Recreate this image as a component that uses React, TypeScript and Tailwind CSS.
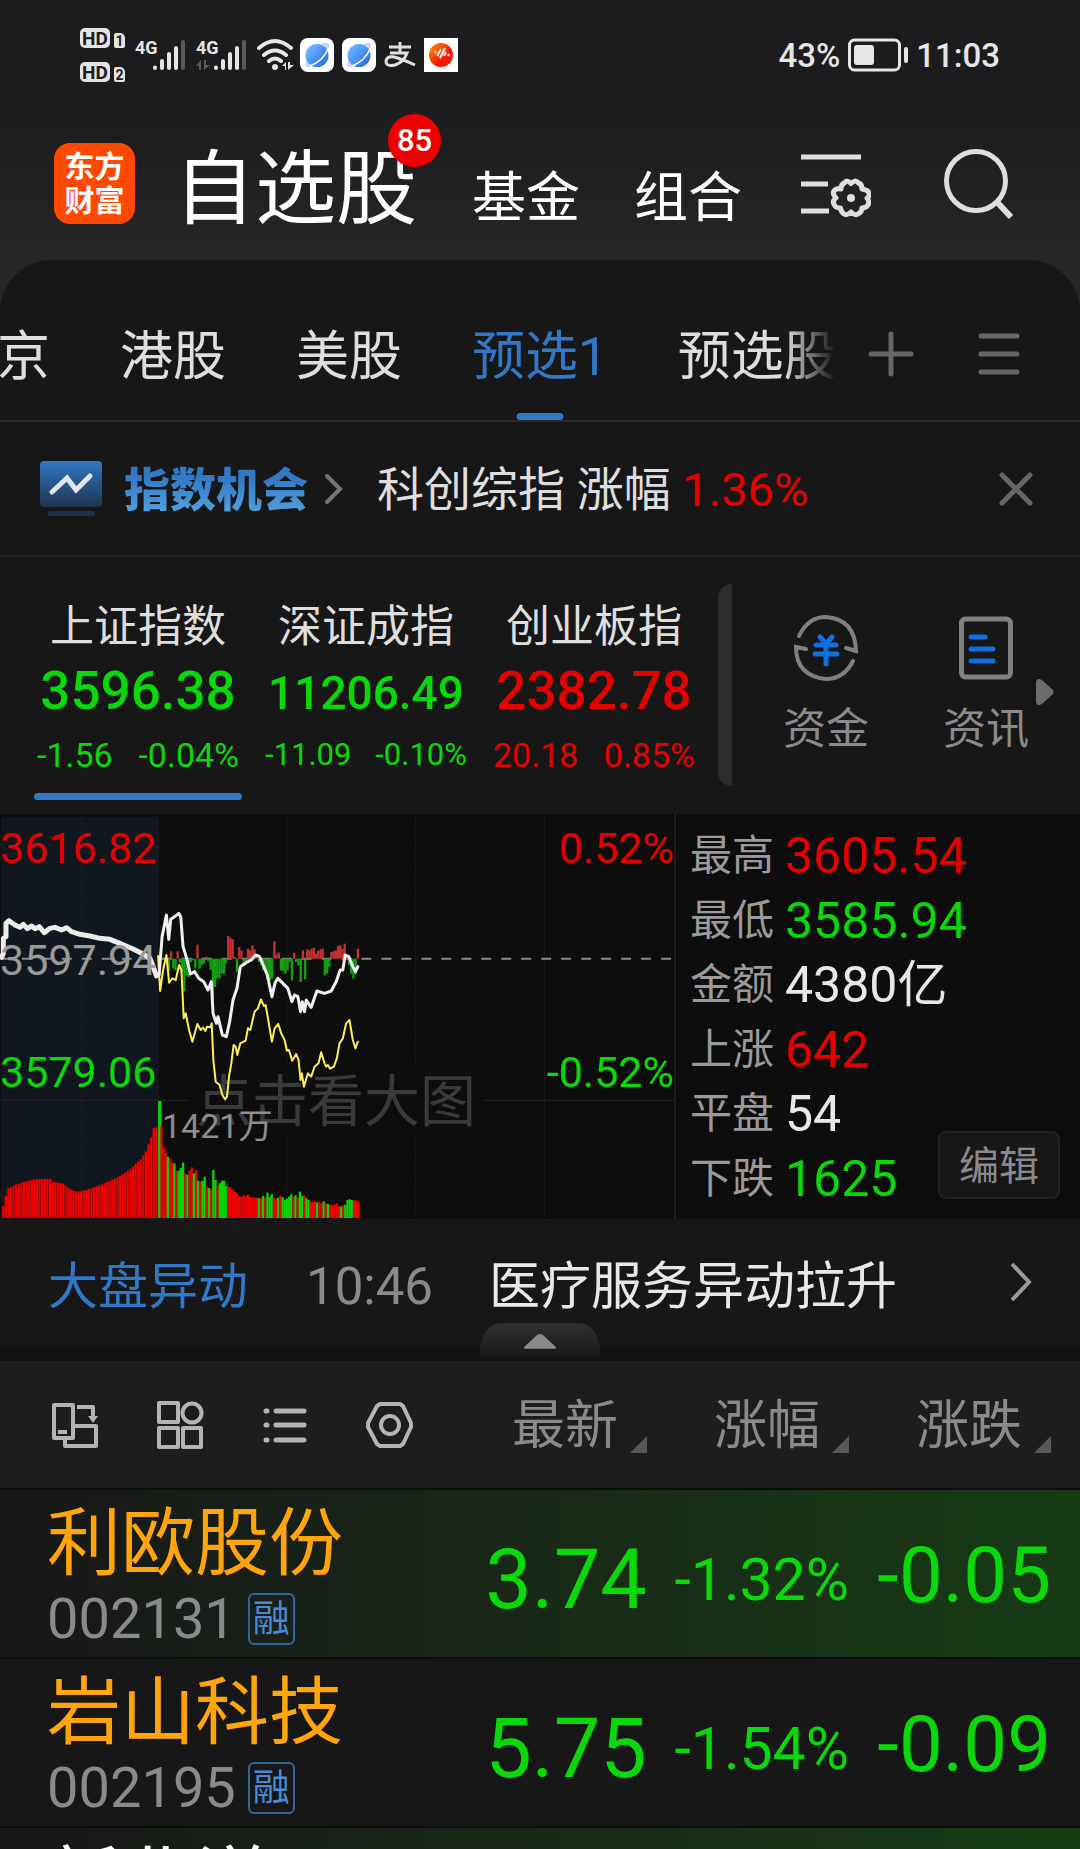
import { ReactNode } from "react";

const UP = "text-[#e60000]";
const DOWN = "text-[#0bd80b]";

const markets = ["京", "港股", "美股", "预选1", "预选股"];

const indices = [
  { name: "上证指数", value: "3596.38", change: "-1.56", percent: "-0.04%", color: DOWN, compact: false },
  { name: "深证成指", value: "11206.49", change: "-11.09", percent: "-0.10%", color: DOWN, compact: true },
  { name: "创业板指", value: "2382.78", change: "20.18", percent: "0.85%", color: UP, compact: false },
];

const stats = [
  { label: "最高", value: "3605.54", color: UP },
  { label: "最低", value: "3585.94", color: DOWN },
  { label: "金额", value: "4380亿", color: "text-[#e8e8e8]" },
  { label: "上涨", value: "642", color: UP },
  { label: "平盘", value: "54", color: "text-[#e8e8e8]" },
  { label: "下跌", value: "1625", color: DOWN },
];

const stocks = [
  { name: "利欧股份", code: "002131", price: "3.74", percent: "-1.32%", change: "-0.05", nameColor: "text-[#ffa50a]", lit: true },
  { name: "岩山科技", code: "002195", price: "5.75", percent: "-1.54%", change: "-0.09", nameColor: "text-[#ffa50a]", lit: false },
  { name: "新北洋", code: "002376", price: "", percent: "", change: "", nameColor: "text-white", lit: true },
];

// Chart data, in chart units: y 476 is the previous close, y 1254 the volume baseline.
const CLOSE_Y = 476;
const BASE_Y = 1254;

const previousLine =
  "5,472 10,460 10,415 18,410 18,370 27,362 45,375 60,382 70,373 82,386 95,378 105,386 118,380 133,398 150,385 165,382 185,390 200,383 215,395 240,403 270,408 300,415 330,418 360,430 400,447 430,462 450,474 462,505 470,528";
const priceLine =
  "470,528 478,525 487,410 500,345 507,418 513,358 522,352 537,340 543,350 550,440 560,472 572,522 585,515 597,535 612,545 625,570 635,545 640,640 650,670 655,650 668,705 680,710 690,665 700,600 712,565 722,500 740,488 755,480 768,465 780,470 795,505 803,525 817,590 826,550 835,535 850,550 865,565 877,605 885,585 895,590 903,635 908,605 915,635 920,600 935,622 952,573 975,580 995,573 1010,545 1022,510 1030,510 1037,465 1048,470 1060,500 1068,515 1075,500";
const averageLine =
  "475,468 481,573 490,510 500,465 508,548 518,535 528,540 538,495 545,510 552,655 558,640 568,690 578,725 593,672 603,690 610,683 617,693 622,680 632,682 636,670 641,780 648,845 660,855 668,885 676,898 682,890 688,830 695,790 702,735 708,740 713,765 722,730 738,722 745,685 752,690 765,635 775,625 784,598 793,618 798,615 806,660 817,725 825,685 836,672 845,700 855,720 862,752 868,750 878,782 890,762 897,780 903,840 907,820 913,860 925,820 935,830 945,800 957,790 965,757 975,790 980,800 985,795 992,806 1003,800 1012,775 1020,730 1030,715 1040,670 1050,660 1060,720 1068,745 1075,725";

const previousVolume = [
  36, 66, 89, 92, 96, 100, 102, 105, 108, 110, 112, 114, 116, 116, 117, 117, 117, 117, 117, 109, 107, 106, 105, 103, 96,
  90, 86, 82, 80, 79, 80, 82, 84, 87, 89, 92, 95, 98, 101, 105, 108, 111, 115, 118, 122, 126, 131, 136, 141, 147, 154,
  162, 170, 176, 187, 199, 222, 242, 270, 272,
];

// Positive is a rising minute, negative a falling one.
const volume = [
  -351, 276, 214, 196, -184, 178, 166, -164, 142, -142, -150, -166, 134, -130, 142, 152, -134, 144, -112, 110, -112, -124,
  94, -90, 86, -144, -114, 98, -104, -112, -112, -96, 94, 91, 84, 79, 74, 66, 64, 68, 66, 70, 64, 62, 61, 61, -59, 59,
  -66, 62, -76, -64, -71, 61, 58, -61, 66, -62, -54, -58, -64, -71, 64, -68, 60, -79, -66, 67, -59, -54, 49, 48, 50, -46,
  49, 44, -50, 44, -42, 40, 38, 40, 44, 36, -34, 38, -40, -54, -56, -54, 54, 52, 48,
];

const momentum = [
  -38, 22, -30, -35, 22, -12, -40, -98, -50, -55, -10, -5, -30, 42, -30, -20, -15, 6, -8, -33, -125, -85, -58, -60, -45,
  -45, -15, 68, 62, 58, 5, -40, 35, 25, -20, -14, 30, 25, 40, 28, 8, -10, -20, -35, -30, -62, -65, -60, 52, 12, 18, -35,
  -38, -45, -35, -10, -65, 18, -10, -20, -70, 25, -62, 28, 25, 30, 33, 15, 24, 28, 30, -50, -45, -25, 20, 22, 25, 38, 40,
  30, 45, 10, -20, -45, -60, -48, 30,
];

function Bars({ values, start, step, base }: { values: number[]; start: number; step: number; base: number }) {
  return values.map((v, i) => (
    <rect
      key={i}
      x={start + i * step}
      y={base - v}
      width={step}
      height={v}
      fill="#ee0202"
      stroke="#7a0b0b"
      strokeWidth={i % 5 === 4 ? 2 : 1}
    />
  ));
}

function Chart() {
  return (
    <div className="relative min-w-0 flex-1">
      <svg className="absolute inset-0 h-full w-full" viewBox="0 42 2025 1215" preserveAspectRatio="none">
        <rect x="3" y="50" width="472" height="1207" fill="#10171f" />
        <g stroke="#2b2d30" strokeWidth="3" strokeDasharray="3 6">
          {[245, 476, 863, 1249, 1636].map((x) => (
            <line key={x} x1={x} x2={x} y1="50" y2="1257" />
          ))}
        </g>
        <rect x="570" y="800" width="880" height="204" fill="#0d0d0d" />
        <path d="M0 901H570M1450 901H2025" stroke="#242424" strokeWidth="3" />
        <path d={`M6 ${CLOSE_Y}H2025`} stroke="#8a8a8a" strokeWidth="6" strokeDasharray="30 30" />
      </svg>

      <p className="absolute top-[260px] left-[196px] text-[56px] leading-[56px] text-[#3a3a3a]">点击看大图</p>
      <p className="absolute top-[295px] left-[162px] text-[34px] leading-[34px] text-[#8e8e8e]">1421万</p>

      <svg className="absolute inset-0 h-full w-full" viewBox="0 42 2025 1215" preserveAspectRatio="none">
        <Bars values={previousVolume} start={6} step={7.8} base={BASE_Y} />
        {volume.map((v, i) => (
          <rect
            key={i}
            x={475 + i * 6.5}
            y={BASE_Y - Math.abs(v)}
            width={i === 0 ? 10 : 7}
            height={Math.abs(v)}
            fill={v < 0 ? "#06d406" : "#ee0202"}
          />
        ))}
        {momentum.map((v, i) => (
          <rect
            key={i}
            x={504 + i * 6.6}
            y={v > 0 ? CLOSE_Y - v : CLOSE_Y}
            width="7"
            height={Math.abs(v)}
            fill={v > 0 ? "#c23232" : "#12a012"}
          />
        ))}
        <g fill="none" strokeLinejoin="round" strokeLinecap="round">
          <polyline points={previousLine} stroke="#ececec" strokeWidth="15" />
          <polyline points={averageLine} stroke="#ffee58" strokeWidth="6" />
          <polyline points={priceLine} stroke="#f0f0f0" strokeWidth="9" />
        </g>
      </svg>

      <div className="absolute inset-0 text-[43px] leading-[44px]">
        <div className={`flex justify-between pt-3 ${UP}`}>
          <span>3616.82</span>
          <span>0.52%</span>
        </div>
        <p className="pt-[68px] text-[#9a9a9a]">3597.94</p>
        <div className={`flex justify-between pt-[68px] ${DOWN}`}>
          <span>3579.06</span>
          <span>-0.52%</span>
        </div>
      </div>
    </div>
  );
}

function HdBadge({ sim }: { sim: string }) {
  return (
    <div className="flex items-end gap-1">
      <span className="flex h-5 w-[30px] items-center justify-center rounded-[5px] bg-[#e4e4e4] text-[19px] leading-none font-bold text-[#1c1c1e]">
        HD
      </span>
      <span className="flex h-[15px] w-[11px] items-center justify-center rounded-[2px] rounded-tr-[5px] bg-[#e4e4e4] text-[14px] leading-none font-bold text-[#1c1c1e]">
        {sim}
      </span>
    </div>
  );
}

function Signal({ data }: { data?: boolean }) {
  return (
    <div className="relative h-8 w-[52px]">
      <span className="absolute top-0 left-0 font-['Liberation_Sans_Narrow',Roboto,sans-serif] text-[18px] leading-none font-bold text-[#e4e4e4]">
        4G
      </span>
      <svg className="absolute inset-0" width="52" height="32" viewBox="0 0 52 32">
        <g stroke="#e6e6e6" strokeWidth="4" strokeLinecap="round">
          <path d="M20 28.500V29M27 22V29M34 15V29M41 9V29" />
          <path d="M48 3V29" stroke="#5a5a5c" />
        </g>
        {data && <path d="M0 27L5 21V31H3V27ZM8 21V31L14 26H10V21Z" fill="#5a5a5c" />}
      </svg>
    </div>
  );
}

function Wifi() {
  return (
    <svg width="38" height="34" viewBox="0 0 38 34" fill="none" stroke="#e6e6e6" strokeWidth="4" strokeLinecap="round">
      <path d="M2 10Q18 -4 34 10M7 17Q18 8 29 17M12 23Q18 18 24 23" />
      <circle cx="18" cy="29" r="3" fill="#e6e6e6" stroke="none" />
      <path d="M25 28L29 24V32H28V28ZM31 24V32L37 27H33V24Z" fill="#e6e6e6" stroke="none" />
    </svg>
  );
}

function BrowserIcon() {
  return (
    <svg width="34" height="34" viewBox="0 0 34 34">
      <defs>
        <linearGradient id="planet" x1="0" y1="0" x2="1" y2="1">
          <stop offset="0" stopColor="#7cc4ff" />
          <stop offset="1" stopColor="#1e63ea" />
        </linearGradient>
      </defs>
      <rect width="34" height="34" rx="8" fill="#fff" />
      <path d="M21 6Q30 3 29 9L26 13ZM6 22Q3 30 9 29L13 27Z" fill="#c3d9fb" />
      <circle cx="17" cy="17.500" r="11.500" fill="url(#planet)" />
      <path d="M10 28Q23 23 28 11" fill="none" stroke="#fff" strokeWidth="1.500" />
    </svg>
  );
}

function AlipayIcon() {
  return (
    <svg width="32" height="34" viewBox="0 0 32 34" fill="none" stroke="#e0e0e0" strokeWidth="3">
      <path d="M5 9H27M16 4V15M6 15H23Q20 24 11 27Q2 29 2 23Q3 18 10 19Q18 21 31 27" />
    </svg>
  );
}

function PulseIcon() {
  return (
    <svg width="34" height="34" viewBox="0 0 34 34">
      <defs>
        <linearGradient id="pulse" x1="0" y1="0" x2="1" y2="1">
          <stop offset="0" stopColor="#ff9800" />
          <stop offset="0.600" stopColor="#f81800" />
        </linearGradient>
      </defs>
      <rect width="34" height="34" fill="#fff" />
      <circle cx="17" cy="17" r="12" fill="url(#pulse)" />
      <path d="M11 15L12 13M13 18L17 11M16 20L21 10M20 18L22 14M24 18L25 16" stroke="#fff" strokeWidth="2" />
    </svg>
  );
}

function StatusBar() {
  return (
    <div className="flex h-[110px] items-center pr-20 pl-20 text-[#e6e6e6]">
      <div className="flex flex-col gap-[14px]">
        <HdBadge sim="1" />
        <HdBadge sim="2" />
      </div>
      <div className="ml-[10px] flex items-center gap-[9px]">
        <Signal />
        <Signal data />
        <Wifi />
      </div>
      <div className="ml-[5px] flex items-center gap-2">
        <BrowserIcon />
        <BrowserIcon />
        <AlipayIcon />
        <PulseIcon />
      </div>
      <div className="ml-auto flex items-center gap-2 text-[33px] leading-none font-medium">
        <span>43%</span>
        <svg width="60" height="34" viewBox="0 0 60 34" fill="none" stroke="#e6e6e6">
          <rect x="1.500" y="2" width="50" height="30" rx="5" strokeWidth="3" />
          <rect x="6" y="7" width="20" height="20" rx="3" fill="#e6e6e6" stroke="none" />
          <path d="M58 11V23" strokeWidth="4" strokeLinecap="round" />
        </svg>
        <span>11:03</span>
      </div>
    </div>
  );
}

function Header() {
  return (
    <header className="flex h-[150px] items-end pr-[66px] pl-[54px] text-white">
      <div className="mb-9 flex h-[81px] w-[81px] flex-col items-center justify-center rounded-2xl bg-[#ff4800] text-[30px] leading-[34px] font-bold">
        <span>东方</span>
        <span>财富</span>
      </div>
      <nav className="mb-[14px] ml-[39px] flex items-baseline">
        <a href="#watchlist" className="relative text-[81px] leading-[112px]">
          自选股
          <span className="absolute -top-5 -right-[24px] flex h-[53px] w-[53px] items-center justify-center rounded-full bg-[#ee0000] text-[31px] leading-none font-medium">
            85
          </span>
        </a>
        <a href="#funds" className="ml-[55px] text-[54px]">
          基金
        </a>
        <a href="#portfolio" className="ml-[54px] text-[54px]">
          组合
        </a>
      </nav>
      <button aria-label="管理" className="mb-10 ml-auto">
        <svg width="70" height="70" viewBox="0 0 70 70" fill="none" stroke="#dedede" strokeWidth="5">
          <path d="M0 7H60M0 34H27M0 61H28" />
          <path
            d="M43.500 33Q46 29 50 33.500Q54 29 57.500 33Q61 34 61 39Q68 40 68 44Q69 46 66 48Q69 52 67 55Q65 58 61 58Q61 62 57 64Q54 66 50 62Q46 66 43 64Q40 62 39.500 58Q34 58 33 54Q31 51 35 48Q31 44 33 41Q35 38 40 39Q40 34 43.500 33Z"
            strokeLinejoin="round"
          />
          <circle cx="50" cy="48" r="4" fill="#dedede" stroke="none" />
        </svg>
      </button>
      <button aria-label="搜索" className="mb-10 ml-[73px]">
        <svg width="70" height="72" viewBox="0 0 70 72" fill="none" stroke="#dedede" strokeWidth="5">
          <circle cx="32" cy="33" r="29.500" />
          <path d="M53 54L67 69" strokeWidth="6" />
        </svg>
      </button>
    </header>
  );
}

function MarketTabs() {
  return (
    <div className="flex h-[162px] items-stretch border-b-2 border-[#2a2a2a] pr-[60px]">
      <div className="-ml-[3px] flex min-w-0 flex-1 gap-[70px] overflow-hidden mask-[linear-gradient(to_right,black_calc(100%-50px),transparent)]">
        {markets.map((m) => (
          <button
            key={m}
            className={`relative shrink-0 pt-9 text-[53px] whitespace-nowrap ${m === "预选1" ? "text-[#3178c6]" : "text-[#dedede]"}`}
          >
            {m}
            {m === "预选1" && (
              <span className="absolute bottom-0 left-1/2 h-[7px] w-[47px] -translate-x-1/2 rounded-full bg-[#3178c6]" />
            )}
          </button>
        ))}
      </div>
      <button aria-label="添加分组" className="ml-[33px] pt-7">
        <svg width="46" height="46" viewBox="0 0 46 46" stroke="#666" strokeWidth="5" strokeLinecap="round">
          <path d="M23 3V43M3 23H43" />
        </svg>
      </button>
      <button aria-label="分组列表" className="ml-16 pt-7">
        <svg width="42" height="46" viewBox="0 0 42 46" stroke="#666" strokeWidth="5" strokeLinecap="round">
          <path d="M3 5H39M3 23H39M3 41H39" />
        </svg>
      </button>
    </div>
  );
}

function Banner() {
  return (
    <div className="flex h-[135px] items-center border-b-2 border-[#262626] pr-[47px] pl-10 text-[47px] text-[#dedede]">
      <svg width="62" height="56" viewBox="0 0 62 56">
        <defs>
          <linearGradient id="screen" x1="0" y1="0" x2="0" y2="1">
            <stop offset="0" stopColor="#3178c6" />
            <stop offset="1" stopColor="#20334d" />
          </linearGradient>
        </defs>
        <rect width="62" height="46" rx="4" fill="url(#screen)" />
        <rect x="8" y="50" width="47" height="5" rx="2" fill="#1f2f44" />
        <path d="M12 31L27 17L36 29L50 15" fill="none" stroke="#dfe6ee" strokeWidth="5" strokeLinecap="round" />
      </svg>
      <a
        href="#index"
        className="mt-1 ml-[22px] bg-linear-to-b from-[#3178c6] from-30% to-[#519fdc] to-80% bg-clip-text text-[46px] font-black text-transparent"
      >
        指数机会
      </a>
      <svg className="ml-4" width="20" height="32" viewBox="0 0 20 32" fill="none" stroke="#777" strokeWidth="4" strokeLinecap="round">
        <path d="M3 3L16 16L3 29" />
      </svg>
      <p className="mt-1 ml-[33px]">
        科创综指 涨幅 <span className={UP}>1.36%</span>
      </p>
      <button aria-label="关闭" className="ml-auto">
        <svg width="34" height="34" viewBox="0 0 34 34" stroke="#666" strokeWidth="5" strokeLinecap="round">
          <path d="M3 3L31 31M31 3L3 31" />
        </svg>
      </button>
    </div>
  );
}

function IndexSummary() {
  return (
    <section className="flex h-[257px] items-start">
      <div className="flex flex-1 gap-5 pl-[34px]">
        {indices.map((item, i) => (
          <button key={item.name} className="relative flex h-[243px] w-[208px] flex-col items-center pt-11">
            <span className="text-[44px] leading-[52px] whitespace-nowrap text-[#dedede]">{item.name}</span>
            <span
              className={`font-medium ${item.compact ? "text-[46px] leading-[72px]" : "text-[53px] leading-[68px]"} mt-1 h-[68px] ${item.color}`}
            >
              {item.value}
            </span>
            <span
              className={`flex w-full justify-between px-[3px] whitespace-nowrap ${item.compact ? "text-[31px]" : "text-[34px]"} mt-2 leading-[44px] ${item.color}`}
            >
              <span>{item.change}</span>
              <span>{item.percent}</span>
            </span>
            {i === 0 && <span className="absolute bottom-0 left-0 h-[7px] w-full rounded-full bg-[#3178c6]" />}
          </button>
        ))}
      </div>
      <div className="mt-[27px] h-[202px] w-[14px] rounded-l-[14px] bg-[#2c2c2e]" />
      <div className="flex w-[348px] items-start pt-[56px] pl-[51px] text-[43px] leading-[52px] text-[#8a8a8e]">
        <button className="flex w-[86px] flex-col items-center gap-5 whitespace-nowrap">
          <svg width="68" height="70" viewBox="0 0 68 70" fill="none" strokeWidth="4" strokeLinecap="round">
            <path d="M7 23Q16 4 34 4Q63 6 64 38L54 35M61 48Q52 66 34 66Q4 63 4 34L14 36" stroke="#808080" />
            <path d="M28 24L34 31L40 24M24 32H44M23 41H45M34 31V51" stroke="#0f6fdc" strokeWidth="5" />
          </svg>
          资金
        </button>
        <button className="ml-[74px] flex w-[86px] flex-col items-center gap-5 whitespace-nowrap">
          <svg width="54" height="70" viewBox="0 0 54 70" fill="none" strokeLinecap="round">
            <rect x="2.500" y="6" width="49" height="58" rx="4" stroke="#808080" strokeWidth="5" />
            <path d="M12 24H26M12 36H34M12 48H34" stroke="#0f6fdc" strokeWidth="5" />
          </svg>
          资讯
        </button>
        <svg className="mt-[65px] ml-[7px]" width="18" height="28" viewBox="0 0 18 28">
          <path d="M0 4Q1 -1 6 2L17 12Q18 14 17 16L6 26Q1 29 0 24Z" fill="#6c6c6c" />
        </svg>
      </div>
    </section>
  );
}

function IndexDetail() {
  return (
    <section className="relative flex h-[405px] bg-[#0d0d0d]">
      <Chart />
      <dl className="grid w-[406px] grid-rows-6 border-l-2 border-[#1d1d1d] pt-2.5 pb-2 pl-[14px]">
        {stats.map((s) => (
          <div key={s.label} className="flex items-center gap-[11px] leading-[64px]">
            <dt className="text-[42px] text-[#9a9a9a]">{s.label}</dt>
            <dd className={`text-[50px] ${s.color}`}>{s.value}</dd>
          </div>
        ))}
      </dl>
      <button className="absolute right-5 bottom-5 h-[68px] w-[122px] rounded-lg border-2 border-[#222] bg-[#171717] pt-1 text-[40px] leading-[60px] text-[#8a8a8e]">
        编辑
      </button>
    </section>
  );
}

function News() {
  return (
    <section className="relative h-[142px] border-b-[14px] border-[#121212]">
      <a href="#news" className="flex h-full items-center pt-2 pr-12 pl-12 text-[50px] whitespace-nowrap">
        <span className="text-[#3178c6]">大盘异动</span>
        <time className="ml-[58px] text-[51px] text-[#8a8a8e]">10:46</time>
        <span className="ml-14 text-[51px] text-[#e8e8e8]">医疗服务异动拉升</span>
        <svg className="mb-2.5 ml-auto" width="22" height="40" viewBox="0 0 22 40" fill="none" stroke="#9a9a9a" strokeWidth="4">
          <path d="M2 2L19 20L2 38" />
        </svg>
      </a>
      <button aria-label="收起" className="absolute -bottom-[11px] left-1/2 -translate-x-1/2">
        <svg width="122" height="35" viewBox="0 0 124 35">
          <defs>
            <linearGradient id="handle" x1="0" y1="0" x2="0" y2="1">
              <stop offset="0" stopColor="#303030" />
              <stop offset="1" stopColor="#171717" />
            </linearGradient>
          </defs>
          <path d="M0 35C2 12 8 0 24 0H100C116 0 122 12 124 35Z" fill="url(#handle)" />
          <path d="M46 24L59 12Q62 10 65 12L78 24Q79 26 77 26H47Q45 26 46 24Z" fill="#8a8a8a" />
        </svg>
      </button>
    </section>
  );
}

function ToolButton({ label, children }: { label: string; children: ReactNode }) {
  return (
    <button aria-label={label}>
      <svg width="48" height="48" viewBox="0 0 48 48" fill="none" stroke="#b4b4b4" strokeWidth="4" strokeLinejoin="round">
        {children}
      </svg>
    </button>
  );
}

function StockTable() {
  return (
    <table className="w-full table-fixed border-collapse">
      <thead className="bg-[#1d1d1d]">
        <tr className="h-32 border-b-2 border-[#0d0d0d]">
          <th className="pl-[51px]">
            <div className="flex items-center gap-[57px]">
              <ToolButton label="横屏">
                <path d="M3 4H22V37H3ZM7 31H16" />
                <path d="M22 25H45V45H14V37M26 6H42V16" />
                <path d="M37 15H47L42 22Z" fill="#b4b4b4" stroke="none" />
              </ToolButton>
              <ToolButton label="宫格">
                <rect x="3" y="2" width="19" height="19" />
                <circle cx="36" cy="12" r="9.500" />
                <rect x="3" y="27" width="19" height="19" />
                <rect x="27" y="27" width="18" height="19" />
              </ToolButton>
              <ToolButton label="列表">
                <path d="M5 10H6M5 24H6M5 39H6M15 10H43M15 24H43M15 39H43" strokeWidth="5" strokeLinecap="round" />
              </ToolButton>
              <ToolButton label="设置">
                <path d="M14 3H34L37 5L45 22V26L37 43L34 45H14L11 43L2 26V22L11 5Z" />
                <circle cx="24" cy="24" r="9" />
              </ToolButton>
            </div>
          </th>
          {["最新", "涨幅", "涨跌"].map((h) => (
            <th key={h} className="w-[202px] p-0 text-[53px] font-normal text-[#8a8a8e] last:w-[231px] last:pr-[29px]">
              <button className="flex w-full items-end justify-end gap-3 pt-1 whitespace-nowrap">
                {h}
                <svg className="mb-[13px]" width="17" height="17" viewBox="0 0 17 17">
                  <path d="M17 0V17H0Z" fill="#58585a" />
                </svg>
              </button>
            </th>
          ))}
        </tr>
      </thead>
      <tbody className={DOWN}>
        {stocks.map((s) => (
          <tr
            key={s.code}
            className={`h-[169px] border-b-2 border-[#0d0d0d] ${s.lit ? "bg-linear-to-r from-[#171717] to-[#163b14]" : ""}`}
          >
            <td className="pt-1 pl-[47px] whitespace-nowrap">
              <p className={`text-[74px] leading-[86px] ${s.nameColor}`}>{s.name}</p>
              <p className="flex items-center gap-3 text-[56px] leading-[64px] text-[#8a8a8e]">
                {s.code}
                <span className="h-[52px] w-[47px] rounded-md border-2 border-[#34649c] text-center text-[37px] leading-[50px] text-[#4a8ad4]">
                  融
                </span>
              </p>
            </td>
            <td className="pt-3 text-right text-[83px] leading-none">{s.price}</td>
            <td className="pt-3 text-right text-[59px] leading-none whitespace-nowrap">{s.percent}</td>
            <td className="pt-1 pr-[29px] text-right text-[78px] leading-none whitespace-nowrap">{s.change}</td>
          </tr>
        ))}
      </tbody>
    </table>
  );
}

export default function App() {
  return (
    <div className="h-screen overflow-hidden bg-[#171717] font-[Roboto,'Noto_Sans_CJK_SC',sans-serif]">
      <div className="bg-linear-to-b from-[#1c1c1e] from-40% to-[#262626]">
        <StatusBar />
        <Header />
      </div>
      <main className="bg-[#262626]">
        <div className="rounded-t-[52px] bg-[#171717]">
          <MarketTabs />
          <Banner />
          <IndexSummary />
          <IndexDetail />
          <News />
          <StockTable />
        </div>
      </main>
    </div>
  );
}
